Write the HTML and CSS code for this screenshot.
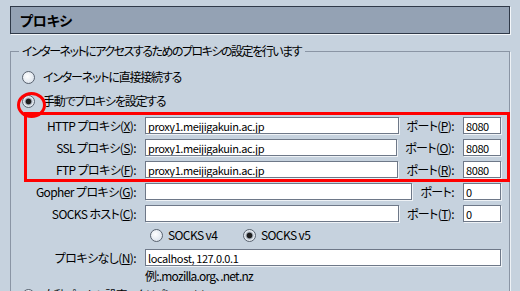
FILE: index.html
```html
<!DOCTYPE html>
<html lang="ja">
<head>
  <meta charset="UTF-8">
  <title>プロキシ</title>
  <link rel="stylesheet" href="styles.css">
</head>
<body>
  <div class="pane">
    <div class="pane-header">プロキシ</div>

    <fieldset class="group">
      <legend>インターネットにアクセスするためのプロキシの設定を行います</legend>

      <label class="choice"><span class="radio"></span>インターネットに直接接続する</label>
      <label class="choice"><span class="radio checked marked"></span>手動でプロキシを設定する</label>

      <div class="manual">
        <div class="highlight">
          <div class="proxy-row">
            <span class="row-label">HTTP プロキシ(<u>X</u>):</span>
            <input type="text" class="field" value="proxy1.meijigakuin.ac.jp">
            <span class="port-label">ポート(<u>P</u>):</span>
            <input type="text" class="field port" value="8080">
          </div>
          <div class="proxy-row">
            <span class="row-label">SSL プロキシ(<u>S</u>):</span>
            <input type="text" class="field" value="proxy1.meijigakuin.ac.jp">
            <span class="port-label">ポート(<u>O</u>):</span>
            <input type="text" class="field port" value="8080">
          </div>
          <div class="proxy-row">
            <span class="row-label">FTP プロキシ(<u>F</u>):</span>
            <input type="text" class="field" value="proxy1.meijigakuin.ac.jp">
            <span class="port-label">ポート(<u>R</u>):</span>
            <input type="text" class="field port" value="8080">
          </div>
        </div>

        <div class="proxy-row">
          <span class="row-label">Gopher プロキシ(<u>G</u>):</span>
          <input type="text" class="field" value="">
          <span class="port-label">ポート:</span>
          <input type="text" class="field port" value="0">
        </div>
        <div class="proxy-row">
          <span class="row-label">SOCKS ホスト(<u>C</u>):</span>
          <input type="text" class="field" value="">
          <span class="port-label">ポート(<u>T</u>):</span>
          <input type="text" class="field port" value="0">
        </div>

        <div class="socks-row">
          <label class="socks-option"><span class="radio"></span>SOCKS v4</label>
          <label class="socks-option"><span class="radio checked"></span>SOCKS v5</label>
        </div>

        <div class="proxy-row">
          <span class="row-label">プロキシなし(<u>N</u>):</span>
          <input type="text" class="field" value="localhost, 127.0.0.1">
        </div>
        <div class="hint">例:.mozilla.org、.net.nz</div>
      </div>

      <label class="choice last"><span class="radio"></span>自動プロキシ設定スクリプト URL(<u>A</u>):</label>
    </fieldset>
  </div>
</body>
</html>
```

FILE: styles.css
```css
* {
  margin: 0;
  padding: 0;
  box-sizing: border-box;
}

body {
  background: #c6d2de;
  color: #000;
  font-family: "Noto Sans CJK JP", "Liberation Sans", sans-serif;
  font-size: 12px;
  font-feature-settings: "palt";
  overflow: hidden;
}

/* Pane */
.pane {
  padding: 6px 10px 0;
}

.pane-header {
  height: 28px;
  line-height: 26px;
  padding-left: 9px;
  background: #94a2b4;
  border: 1px solid #2f3948;
  box-shadow: 1px 1px 0 #f4f7fa;
  font-size: 14px;
  font-weight: 700;
  letter-spacing: -0.3px;
}

/* Group box */
.group {
  margin-top: 10px;
  padding: 10px 8px 0 8px;
  border: 1px solid #8a95a4;
  box-shadow: 1px 1px 0 #eef2f6;
  min-height: 300px;
}

.group legend {
  padding: 0 4px 0 3px;
  line-height: 14px;
  letter-spacing: -1.5px;
}

.choice {
  display: flex;
  align-items: center;
  height: 18px;
  margin-left: 3px;
  line-height: 14px;
  letter-spacing: -1.2px;
}

.choice + .choice {
  margin-top: 6px;
}

.choice .radio {
  margin-right: 8px;
}

.choice.last {
  margin-top: 3px;
}

/* Radio buttons */
.radio {
  position: relative;
  flex: none;
  width: 13px;
  height: 13px;
  border: 1px solid #59626f;
  border-radius: 50%;
  background: radial-gradient(circle at 40% 40%, #ffffff, #dfe6ee 70%);
}

.radio.checked {
  background: radial-gradient(circle, #1e1e1e 2.4px, #9aa3ae 3.2px, #e4eaf0 4.5px);
}

.radio.marked::after {
  content: '';
  position: absolute;
  left: -6px;
  top: -4px;
  width: 23px;
  height: 20px;
  border: 3px solid #ff0000;
  border-radius: 50%;
}

/* Manual proxy rows */
.manual {
  display: flex;
  flex-direction: column;
  gap: 5px;
  margin-top: 7px;
}

.highlight {
  position: relative;
  display: flex;
  flex-direction: column;
  gap: 5px;
}

.highlight::after {
  content: '';
  position: absolute;
  left: 5px;
  right: -9px;
  top: -5px;
  bottom: -4px;
  border: 3px solid #ff0000;
  pointer-events: none;
}

.proxy-row {
  display: flex;
  align-items: center;
  height: 17px;
  line-height: 14px;
}

.row-label {
  flex: none;
  width: 117px;
  margin-right: 9px;
  text-align: right;
  white-space: nowrap;
  letter-spacing: -0.6px;
}

.field {
  flex: 1;
  min-width: 0;
  height: 17px;
  padding: 0 2px;
  border: 1px solid #6e7888;
  box-shadow: 1px 1px 0 #eef2f6;
  background: #fff;
  color: #000;
  font: inherit;
  font-size: 11px;
  line-height: 15px;
  letter-spacing: -0.4px;
  outline: none;
}

.field.port {
  flex: none;
  width: 38px;
}

.port-label {
  flex: none;
  margin: 0 9px 0 8px;
  white-space: nowrap;
  letter-spacing: -0.6px;
}

/* SOCKS version */
.socks-row {
  display: flex;
  align-items: center;
  height: 18px;
  margin-top: -1px;
  padding-left: 131px;
  line-height: 14px;
  letter-spacing: -0.6px;
}

.socks-option {
  display: flex;
  align-items: center;
  width: 93px;
}

.socks-option .radio {
  margin-right: 5px;
}

.hint {
  padding-left: 126px;
  margin-top: -2px;
  line-height: 14px;
  letter-spacing: -0.8px;
}
```
